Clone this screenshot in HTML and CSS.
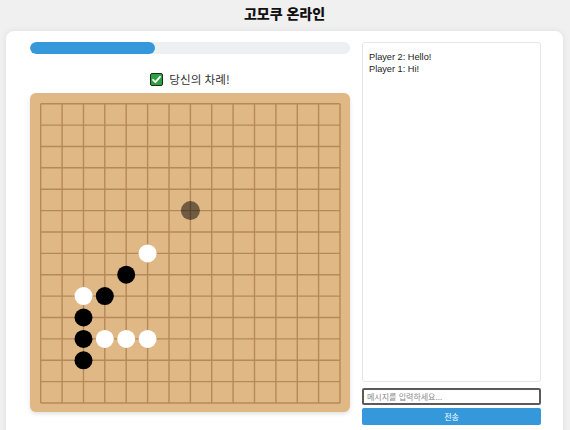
FILE: index.html
```html
<!DOCTYPE html>
<html lang="ko">
<head>
<meta charset="utf-8">
<title>고모쿠 온라인</title>
<link rel="stylesheet" href="styles.css">
</head>
<body>
<h1 class="title">고모쿠 온라인</h1>
<main class="card">
  <section class="game">
    <div class="progress"><div class="progress-fill" style="width:39%"></div></div>
    <div class="status">
      <svg class="check" width="13" height="13" viewBox="0 0 13 13">
        <rect x="0.5" y="0.5" width="12" height="12" rx="1.5" fill="#2ea043" stroke="#1d2b1d"/>
        <path d="M3 6.8 L5.4 9.2 L10 3.8" fill="none" stroke="#fff" stroke-width="1.8" stroke-linecap="round" stroke-linejoin="round"/>
      </svg>
      <span>당신의 차례!</span>
    </div>
    <div class="board">
      <svg width="320" height="320" viewBox="0 0 320 320">
        <path class="grid" d="M10.7 10.7V310 M32.1 10.7V310 M53.5 10.7V310 M74.8 10.7V310 M96.2 10.7V310 M117.6 10.7V310 M139 10.7V310 M160.4 10.7V310 M181.7 10.7V310 M203.1 10.7V310 M224.5 10.7V310 M245.9 10.7V310 M267.3 10.7V310 M288.6 10.7V310 M310 10.7V310
        M10.7 10.7H310 M10.7 32.1H310 M10.7 53.5H310 M10.7 74.8H310 M10.7 96.2H310 M10.7 117.6H310 M10.7 139H310 M10.7 160.4H310 M10.7 181.7H310 M10.7 203.1H310 M10.7 224.5H310 M10.7 245.9H310 M10.7 267.3H310 M10.7 288.6H310 M10.7 310H310"/>
        <circle cx="160.4" cy="117.6" r="9.5" class="ghost"/>
        <circle cx="117.6" cy="160.4" r="9" class="white"/>
        <circle cx="96.2" cy="181.7" r="9" class="black"/>
        <circle cx="53.5" cy="203.1" r="9" class="white"/>
        <circle cx="74.8" cy="203.1" r="9" class="black"/>
        <circle cx="53.5" cy="224.5" r="9" class="black"/>
        <circle cx="53.5" cy="245.9" r="9" class="black"/>
        <circle cx="74.8" cy="245.9" r="9" class="white"/>
        <circle cx="96.2" cy="245.9" r="9" class="white"/>
        <circle cx="117.6" cy="245.9" r="9" class="white"/>
        <circle cx="53.5" cy="267.3" r="9" class="black"/>
      </svg>
    </div>
  </section>
  <aside class="chat">
    <div class="messages">
      <div class="msg">Player 2: Hello!</div>
      <div class="msg">Player 1: Hi!</div>
    </div>
    <input class="chat-input" type="text" placeholder="메시지를 입력하세요...">
    <button class="send">전송</button>
  </aside>
</main>
</body>
</html>
```
FILE: styles.css
```css
html, body {
  margin: 0;
  padding: 0;
  background: #f0f0f0;
  overflow: hidden;
}
body {
  padding: 0 7px 0 6px;
  font-family: "Noto Sans CJK KR", "Liberation Sans", sans-serif;
  color: #333;
}
.title {
  margin: 0;
  height: 26px;
  line-height: 26px;
  text-align: center;
  font-size: 14px;
  font-weight: 900;
  color: #111;
}
.card {
  margin-top: 5px;
  background: #fff;
  border-radius: 8px;
  box-shadow: 0 0 6px rgba(0,0,0,0.08);
  padding: 11px 22px 20px 24px;
  display: flex;
  gap: 12px;
  height: 420px;
  box-sizing: border-box;
}
.game {
  width: 320px;
  display: flex;
  flex-direction: column;
}
.progress {
  height: 12px;
  border-radius: 6px;
  background: #ecf0f1;
  overflow: hidden;
}
.progress-fill {
  height: 100%;
  background: #3498db;
  border-radius: 6px;
}
.status {
  margin-top: 16px;
  height: 18px;
  display: flex;
  align-items: center;
  justify-content: center;
  gap: 6px;
  font-size: 11.6px;
  color: #333;
}
.check { display: block; }
.board {
  margin-top: 5px;
  width: 320px;
  height: 319px;
  background: #e0b886;
  border-radius: 6px;
  box-shadow: 0 2px 4px rgba(0,0,0,0.12);
}
.board svg { display: block; }
.grid {
  stroke: #8b5a2b;
  stroke-opacity: 0.5;
  stroke-width: 1.4;
  fill: none;
}
.black { fill: #000; }
.white { fill: #fff; }
.ghost { fill: rgba(0,0,0,0.5); }
.chat {
  width: 179px;
  display: flex;
  flex-direction: column;
}
.messages {
  height: 340px;
  box-sizing: border-box;
  border: 1px solid #e6e6e6;
  border-radius: 3px;
  padding: 9px 6px;
  font-family: "Liberation Sans", Arial, sans-serif;
  font-size: 9.2px;
  line-height: 11.6px;
  color: #222;
}
.chat-input {
  margin: 6px 0 0;
  height: 17px;
  box-sizing: border-box;
  border: 2px solid #5a5a5a;
  border-radius: 2px;
  padding: 0 3px;
  font-family: "Noto Sans CJK KR", sans-serif;
  font-size: 8px;
  outline: none;
}
.chat-input::placeholder { color: #888; }
.send {
  margin-top: 3px;
  height: 17px;
  border: none;
  border-radius: 2px;
  background: #3498db;
  color: #fff;
  font-family: "Noto Sans CJK KR", sans-serif;
  font-size: 8px;
  padding: 0;
}
```
